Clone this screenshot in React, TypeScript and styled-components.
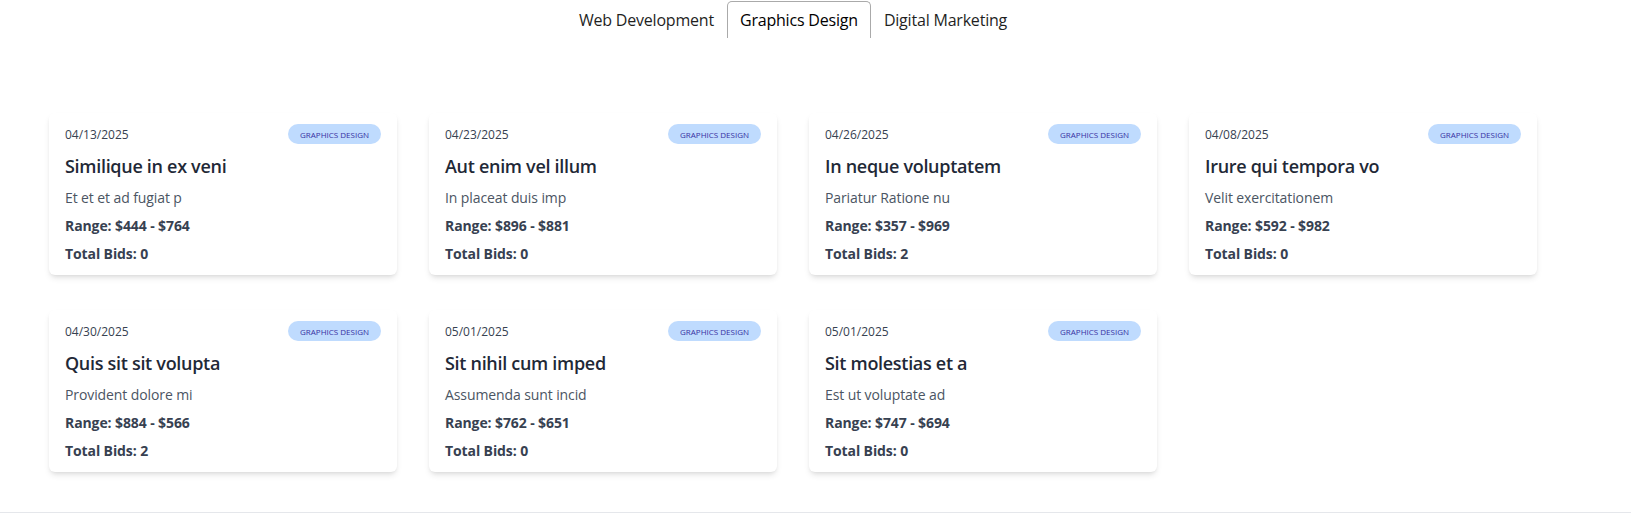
import React, { useState } from "react";
import styled, { createGlobalStyle } from "styled-components";

const GlobalStyle = createGlobalStyle`
  html, body { margin: 0; padding: 0; background: #ffffff; }
  body {
    font-family: "Segoe UI", "Open Sans", "Noto Sans", sans-serif;
    color: #1f2937;
    overflow: hidden;
  }
  * { box-sizing: border-box; }
`;

type Job = {
  date: string;
  title: string;
  desc: string;
  min: number;
  max: number;
  bids: number;
};

const jobs: Job[] = [
  { date: "04/13/2025", title: "Similique in ex veni", desc: "Et et et ad fugiat p", min: 444, max: 764, bids: 0 },
  { date: "04/23/2025", title: "Aut enim vel illum", desc: "In placeat duis imp", min: 896, max: 881, bids: 0 },
  { date: "04/26/2025", title: "In neque voluptatem", desc: "Pariatur Ratione nu", min: 357, max: 969, bids: 2 },
  { date: "04/08/2025", title: "Irure qui tempora vo", desc: "Velit exercitationem", min: 592, max: 982, bids: 0 },
  { date: "04/30/2025", title: "Quis sit sit volupta", desc: "Provident dolore mi", min: 884, max: 566, bids: 2 },
  { date: "05/01/2025", title: "Sit nihil cum imped", desc: "Assumenda sunt incid", min: 762, max: 651, bids: 0 },
  { date: "05/01/2025", title: "Sit molestias et a", desc: "Est ut voluptate ad", min: 747, max: 694, bids: 0 },
];

const tabs = ["Web Development", "Graphics Design", "Digital Marketing"];

const Page = styled.div`
  display: flex;
  flex-direction: column;
  min-height: 100vh;
`;

const Container = styled.main`
  width: 1488px;
  margin-left: 49px;
  display: flex;
  flex-direction: column;
  align-items: center;
  padding-bottom: 40px;
`;

const TabList = styled.ul`
  display: flex;
  margin: 0;
  padding: 0;
  list-style: none;
  border-bottom: 1px solid #aaaaaa;
`;

const Tab = styled.li<{ $active: boolean }>`
  position: relative;
  bottom: -1px;
  padding: 6px 12px;
  font-size: 16px;
  line-height: 24px;
  letter-spacing: -0.2px;
  color: ${(p) => (p.$active ? "#000000" : "#1f1f1f")};
  background: #ffffff;
  border: 1px solid ${(p) => (p.$active ? "#aaaaaa" : "transparent")};
  border-bottom: none;
  border-radius: 5px 5px 0 0;
  cursor: pointer;
`;

const Grid = styled.section`
  align-self: stretch;
  margin-top: 75px;
  display: grid;
  grid-template-columns: repeat(4, 348px);
  column-gap: 32px;
  row-gap: 35px;
`;

const Card = styled.article`
  display: flex;
  flex-direction: column;
  gap: 8px;
  padding: 11px 16px 11px;
  background: #ffffff;
  border-radius: 6px;
  box-shadow: 0 4px 6px -1px rgba(0, 0, 0, 0.1), 0 2px 4px -2px rgba(0, 0, 0, 0.1);
`;

const CardHeader = styled.div`
  display: flex;
  justify-content: space-between;
  align-items: center;
  height: 20px;
`;

const DateText = styled.span`
  font-size: 12px;
  color: #374151;
`;

const Badge = styled.span`
  display: inline-flex;
  align-items: center;
  height: 20px;
  padding: 0 12px;
  border-radius: 10px;
  background: #bfdbfe;
  color: #3730a3;
  font-size: 8px;
  text-transform: uppercase;
`;

const Title = styled.h3`
  margin: 0;
  font-size: 18px;
  line-height: 28px;
  font-weight: 600;
  letter-spacing: -0.3px;
  color: #1f2937;
`;

const Desc = styled.p`
  margin: 0;
  font-size: 14px;
  line-height: 20px;
  letter-spacing: -0.1px;
  color: #4b5563;
`;

const Stat = styled.p`
  margin: 0;
  font-size: 14px;
  line-height: 20px;
  font-weight: 700;
  letter-spacing: -0.1px;
  color: #374151;
`;

const Footer = styled.footer`
  border-top: 1px solid #e5e7eb;
  height: 80px;
`;

export default function App() {
  const [active, setActive] = useState(1);
  return (
    <Page>
      <GlobalStyle />
      <Container>
        <TabList>
          {tabs.map((t, i) => (
            <Tab key={t} $active={i === active} onClick={() => setActive(i)}>
              {t}
            </Tab>
          ))}
        </TabList>
        <Grid>
          {jobs.map((j, i) => (
            <Card key={i}>
              <CardHeader>
                <DateText>{j.date}</DateText>
                <Badge>Graphics Design</Badge>
              </CardHeader>
              <Title>{j.title}</Title>
              <Desc>{j.desc}</Desc>
              <Stat>
                Range: ${j.min} - ${j.max}
              </Stat>
              <Stat>Total Bids: {j.bids}</Stat>
            </Card>
          ))}
        </Grid>
      </Container>
      <Footer />
    </Page>
  );
}
